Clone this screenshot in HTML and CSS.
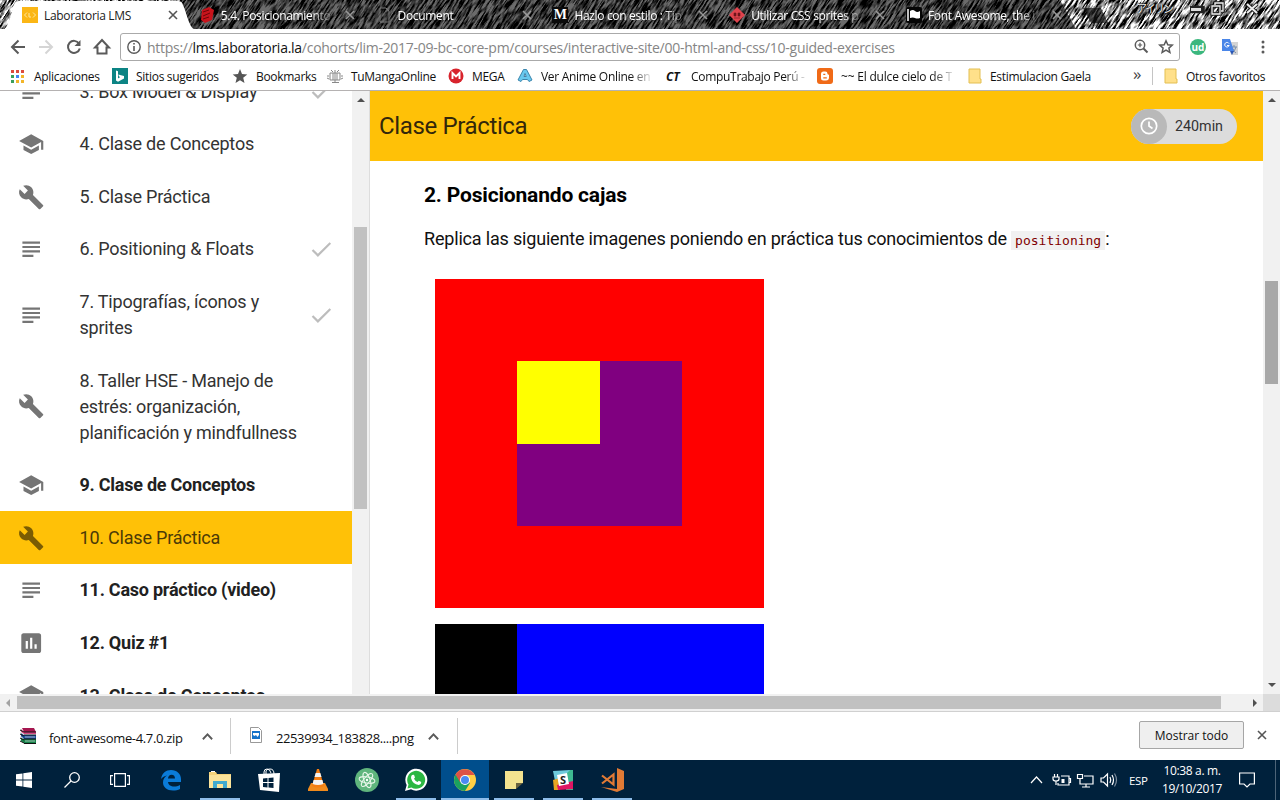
FILE: index.html
```html
<!DOCTYPE html>
<html lang="es">
<head>
<meta charset="utf-8">
<title>Laboratoria LMS</title>
<link rel="stylesheet" href="styles.css">
</head>
<body>
<svg class="defs" width="0" height="0">
  <defs>
    <symbol id="school" viewBox="0 0 24 24"><path d="M5 13.180v4L12 21l7-3.820v-4L12 17l-7-3.820zM12 3 1 9l11 6 9-4.910V17h2V9L12 3z"/></symbol>
    <symbol id="build" viewBox="0 0 24 24"><path d="M22.700 19l-9.100-9.100c.9-2.300.4-5-1.500-6.900-2-2-5-2.400-7.400-1.300L9 6 6 9 1.600 4.700C.4 7.100.9 10.100 2.900 12.100c1.900 1.900 4.600 2.400 6.900 1.500l9.100 9.100c.4.4 1 .4 1.400 0l2.300-2.300c.5-.4.5-1.100.1-1.400z"/></symbol>
    <symbol id="lines" viewBox="0 0 24 24"><path d="M4 5h16v2H4zM4 9h16v2H4zM4 13h16v2H4zM4 17h10v2H4z"/></symbol>
    <symbol id="chart" viewBox="0 0 24 24"><path fill-rule="evenodd" d="M19 3H5c-1.100 0-2 .9-2 2v14c0 1.100.9 2 2 2h14c1.100 0 2-.9 2-2V5c0-1.100-.9-2-2-2zM9 17H7v-7h2v7zm4 0h-2V7h2v10zm4 0h-2v-4h2v4z"/></symbol>
    <symbol id="check" viewBox="0 0 24 24"><path d="M9 16.200 4.800 12l-1.400 1.400L9 19 21 7l-1.400-1.400L9 16.200z"/></symbol>
    <symbol id="close" viewBox="0 0 10 10"><path d="M1 1l8 8M9 1L1 9" fill="none" stroke="currentColor" stroke-width="1.600"/></symbol>
    <symbol id="folder" viewBox="0 0 14 16"><path d="M1 1h11v10h1v4H1z" fill="#ffe08a" stroke="#e3bf52"/></symbol>
    <symbol id="up" viewBox="0 0 10 10"><path d="M.8 7.500 5 3l4.200 4.500" fill="none" stroke="#5a5a5a" stroke-width="1.700"/></symbol>
  </defs>
</svg>

<header class="tabstrip">
  <svg class="sketch" width="1280" height="29" viewBox="0 0 1280 29">
    <defs>
      <filter id="hatch" x="0" y="0" width="1" height="1" color-interpolation-filters="sRGB">
        <feTurbulence type="fractalNoise" baseFrequency="0.62 0.07" numOctaves="4" seed="7"/>
        <feColorMatrix values="3.800 0 0 0 -1.400  3.800 0 0 0 -1.400  3.800 0 0 0 -1.400  0 0 0 0 1"/>
      </filter>
    </defs>
    <g transform="rotate(34 640 14)"><rect x="-60" y="-460" width="1400" height="950" filter="url(#hatch)"/></g>
    <path class="shade" d="M180 0h880l16 29H192z"/>
    <path d="M1083 8h18l7 15h-17z" fill="#111" opacity=".7"/>
    <path d="M4 29C9 27 12 9 14 5q1-4 5-4h159q4 0 5 4c3 6 6 22 11 24z" fill="#fff"/>
  </svg>
  <div class="tabs">
    <div class="tab active">
      <svg class="fav" viewBox="0 0 16 16"><path fill="#fbb615" d="M0 0h16v16H0z"/><path d="M5 5.500 2.500 8 5 10.500M11 5.500 13.500 8 11 10.500M7 6v4h2" fill="none" stroke="#ffe7a0"/></svg>
      <span>Laboratoria LMS</span><svg class="x"><use href="#close"/></svg>
    </div>
    <div class="tab">
      <svg class="fav" viewBox="0 0 16 16"><path d="M3 3l7-3 5 3-2 10-7 3-4-3z" fill="#c8141c"/><path d="M4 5l6-2M4 9l7-3M4 12l6-2" stroke="#6f0509"/></svg>
      <span>5.4. Posicionamiento</span><svg class="x"><use href="#close"/></svg>
    </div>
    <div class="tab">
      <svg class="fav" viewBox="0 0 16 16"><path d="M4 1h6l3 3v11H4z" fill="none" stroke="#777"/></svg>
      <span>Document</span><svg class="x"><use href="#close"/></svg>
    </div>
    <div class="tab">
      <span class="fav medium">M</span>
      <span>Hazlo con estilo : Tip</span><svg class="x"><use href="#close"/></svg>
    </div>
    <div class="tab">
      <svg class="fav" viewBox="0 0 16 16"><path d="M8 0l8 8-8 8-8-8z" fill="#e0434d"/><path d="M5 6h2v3H5zM9 6h2v3H9zM5 11h6" fill="#6e151b" stroke="#6e151b" stroke-width=".6"/></svg>
      <span>Utilizar CSS sprites p</span><svg class="x"><use href="#close"/></svg>
    </div>
    <div class="tab">
      <svg class="fav" viewBox="0 0 16 16"><rect width="16" height="16" rx="2" fill="#050505"/><path d="M2 2v12" stroke="#fff" stroke-width="1.500"/><path d="M4 4q3-2 5 0t5 0v7q-3 1-5 0t-5 0z" fill="#fff"/></svg>
      <span class="loose">Font Awesome, the i</span><svg class="x"><use href="#close"/></svg>
    </div>
  </div>
  <div class="winbar">
    <span class="user">アイリン</span>
    <svg width="80" height="18" viewBox="0 0 80 18" fill="none">
      <path d="M1 7.500h12v4H1zM22 6h8v8h-8zM25 3h8v8h-3" stroke="#222" stroke-width="3.500"/>
      <path d="M1 9.500h10" stroke="#ddd" stroke-width="3"/><path d="M22 6h8v8h-8zM25 5V3h8v8h-2" stroke="#eee" stroke-width="1.300"/>
      <path d="M57 4l10 9M67 4l-10 9" stroke="#222" stroke-width="4"/><path d="M57 4l10 9M67 4l-10 9" stroke="#eee" stroke-width="2"/>
    </svg>
  </div>
</header>

<nav class="toolbar">
  <svg class="nav" width="114" height="33" viewBox="0 0 114 33" fill="none" stroke="#5a5a5a" stroke-width="2">
    <path d="M25 18H12.500M18.500 11.500 12 18l6.500 6.500"/>
    <path d="M39 18h12.500M45.500 11.500 52 18l-6.500 6.500" stroke="#d5d5d5"/>
    <path d="M79 14.500a6 6 0 1 0 .8 5"/><path d="M80.500 11v6h-6z" fill="#5a5a5a" stroke="none"/>
    <path d="M97.500 18.500v6h9v-6h2.500L102 11l-7 7.500z"/>
  </svg>
  <div class="omnibox">
    <svg width="14" height="14" viewBox="0 0 14 14"><circle cx="7" cy="7" r="6.200" fill="none" stroke="#5a5a5a" stroke-width="1.400"/><path d="M6.200 3h1.600v1.600H6.200zM6.200 6h1.600v5H6.200z" fill="#5a5a5a"/></svg>
    <span class="url">https://<b>lms.laboratoria.la</b>/cohorts/lim-2017-09-bc-core-pm/courses/interactive-site/00-html-and-css/10-guided-exercises</span>
    <svg class="omni-icons" width="42" height="16" viewBox="0 0 42 16" fill="none" stroke="#5a5a5a" stroke-width="1.500"><circle cx="6" cy="6" r="4.700"/><path d="M9.500 9.500l4 4" stroke-width="2"/><path d="M3.800 6h4.400M6 3.800v4.400" stroke-width="1.200"/><path d="M32 1.800l1.800 4 4.400.4-3.300 2.900 1 4.300L32 11.100l-3.900 2.300 1-4.300-3.300-2.900 4.400-.4z"/></svg>
  </div>
  <span class="ud">ud</span>
  <svg class="translate" width="16" height="16" viewBox="0 0 16 16"><path d="M6 3h10v13H9z" fill="#d4d4d4"/><path d="M9 8h6M12 6v2M14 8q-1 4-4 6M11 10q1 3 3 4" stroke="#7a8fa8" fill="none"/><path d="M0 0h8l4 12H0z" fill="#4a86e8"/><path d="M8 12h4l-2 4z" fill="#2b57b5"/><path d="M7 4.500a2.300 2.300 0 1 0 .2 2H5" stroke="#fff" fill="none"/></svg>
  <svg class="dots" width="4" height="16" viewBox="0 0 4 16" fill="#5a5a5a"><circle cx="2" cy="3" r="1.500"/><circle cx="2" cy="8" r="1.500"/><circle cx="2" cy="13" r="1.500"/></svg>
</nav>

<nav class="bookmarks">
  <div class="bm b1"><svg width="14" height="14" viewBox="0 0 14 14"><path fill="#dd4b3e" d="M1 1h3v3H1zM6 1h3v3H6zM11 1h3v3h-3z"/><path fill="#3a9f5c" d="M1 6h3v3H1z"/><path fill="#4285f4" d="M6 6h3v3H6z"/><path fill="#f2b529" d="M11 6h3v3h-3zM6 11h3v3H6zM11 11h3v3h-3z"/><path fill="#3a9f5c" d="M1 11h3v3H1z"/></svg><span>Aplicaciones</span></div>
  <div class="bm b2"><svg width="16" height="16" viewBox="0 0 16 16"><path fill="#0c8484" d="M0 0h16v16H0z"/><path d="M4 2.500l2 .7v7.300l2.200-1.400-1.200-.5-.8-2L12 8v2.400L6 13.700l-2-1.200z" fill="#fff"/></svg><span>Sitios sugeridos</span></div>
  <div class="bm b3"><svg width="16" height="16" viewBox="0 0 16 16"><path fill="#555" d="M8 1l2 5 5.300.4-4.100 3.400 1.300 5.200L8 12.200 3.500 15l1.300-5.200L.7 6.400 6 6z"/></svg><span>Bookmarks</span></div>
  <div class="bm b4"><svg width="16" height="16" viewBox="0 0 16 16" fill="none" stroke="#888"><path d="M3 5h10v7H3zM6 5v7M8 2v12M10 5v7M4 2l2 2M12 2l-2 2M0 10l2 1M14 11l2-1M5 14.500h7M0 8h2M14 8h2"/></svg><span>TuMangaOnline</span></div>
  <div class="bm b5"><svg width="16" height="16" viewBox="0 0 16 16"><circle cx="8" cy="8" r="7.500" fill="#d8232c"/><path d="M4.500 11V5l3.500 3.500L11.500 5v6" fill="none" stroke="#fff" stroke-width="1.900"/></svg><span>MEGA</span></div>
  <div class="bm b6"><svg width="16" height="16" viewBox="0 0 16 16"><path d="M6.500 1.500h3L15 12l-3 1.500-1.500-2h-5L4 13.500 1 12z" fill="#68c8ee" stroke="#3d86ad"/><path d="M7 8.500l1-3 1.200 3z" fill="#fff" stroke="#245c86" stroke-width=".7"/></svg><span>Ver Anime Online en</span></div>
  <div class="bm b7"><i class="ct">CT</i><span>CompuTrabajo Perú -</span></div>
  <div class="bm b8"><svg width="16" height="16" viewBox="0 0 16 16"><rect width="16" height="16" rx="3" fill="#f06a17"/><path d="M4 6q0-2.500 2.500-2.500h1.700q2.300 0 2.300 2.300 0 1 1.500 1v2.700q0 3-3 3H6.500Q4 12.500 4 10z" fill="#fff"/><path d="M6.300 6.300h2M6.300 9.800h3.500" stroke="#f06a17" stroke-width="1.200"/></svg><span>~~ El dulce cielo de T</span></div>
  <div class="bm b9"><svg width="14" height="16"><use href="#folder"/></svg><span>Estimulacion Gaela</span></div>
  <div class="more">»</div>
  <div class="bm b10"><svg width="14" height="16"><use href="#folder"/></svg><span>Otros favoritos</span></div>
</nav>

<main class="page">
  <aside class="sidebar">
    <ul class="lessons">
      <li><svg class="ico"><use href="#lines"/></svg><span>3. Box Model &amp; Display</span><svg class="ok"><use href="#check"/></svg></li>
      <li><svg class="ico"><use href="#school"/></svg><span>4. Clase de Conceptos</span></li>
      <li><svg class="ico"><use href="#build"/></svg><span>5. Clase Práctica</span></li>
      <li><svg class="ico"><use href="#lines"/></svg><span>6. Positioning &amp; Floats</span><svg class="ok"><use href="#check"/></svg></li>
      <li><svg class="ico"><use href="#lines"/></svg><span>7. Tipografías, íconos y<br>sprites</span><svg class="ok"><use href="#check"/></svg></li>
      <li><svg class="ico"><use href="#build"/></svg><span>8. Taller HSE - Manejo de<br>estrés: organización,<br>planificación y mindfullness</span></li>
      <li class="todo"><svg class="ico"><use href="#school"/></svg><span>9. Clase de Conceptos</span></li>
      <li class="current"><svg class="ico"><use href="#build"/></svg><span>10. Clase Práctica</span></li>
      <li class="todo"><svg class="ico"><use href="#lines"/></svg><span>11. Caso práctico (video)</span></li>
      <li class="todo"><svg class="ico"><use href="#chart"/></svg><span>12. Quiz #1</span></li>
      <li class="todo"><svg class="ico"><use href="#school"/></svg><span>13. Clase de Conceptos</span></li>
    </ul>
    <div class="vscroll side"><i class="arrow a-up"></i><div class="thumb"></div></div>
  </aside>
  <section class="lesson">
    <div class="head">
      <h1>Clase Práctica</h1>
      <div class="chip"><span class="clock"><svg width="24" height="24" viewBox="0 0 24 24" fill="none" stroke="#fff" stroke-width="1.700"><circle cx="12" cy="12" r="7.700"/><path d="M12 7.500V12l3.500 2.500"/></svg></span><span class="mins">240min</span></div>
    </div>
    <div class="body">
      <h2>2. Posicionando cajas</h2>
      <p>Replica las siguiente imagenes poniendo en práctica tus conocimientos de <code>positioning</code>:</p>
      <div class="red"><div class="purple"><div class="yellow"></div></div></div>
      <div class="blue"><div class="black"></div></div>
    </div>
  </section>
  <div class="vscroll outer"><i class="arrow a-up"></i><div class="thumb"></div><i class="arrow a-down"></i></div>
</main>
<div class="hscroll"><i class="arrow a-left"></i><div class="hthumb"></div><i class="arrow a-right"></i><div class="corner"></div></div>

<section class="downloads">
  <div class="dl d1">
    <svg width="18" height="18" viewBox="0 0 18 18"><path d="M3 1h12l2 4H5z" fill="#a5164f"/><path d="M2 2l3 3h12v2H5L2 5z" fill="#d94b86"/><path d="M2 6l3 2h12v4H5L2 10z" fill="#1d4f9c"/><path d="M2 11l3 1h12v4H5L2 14z" fill="#16824a"/><path d="M1 3l4 2M1 7l4 2M1 11l4 2M1 14l4 2M5 5h12M5 8h12M5 12h12M5 16.500h12" stroke="#111"/><path d="M6 10h10M6 14h10M1 5l3 2M1 9l3 2" stroke="#ddd" stroke-width=".7"/></svg>
    <span>font-awesome-4.7.0.zip</span><svg width="11" height="11"><use href="#up"/></svg>
  </div>
  <div class="dl d2">
    <svg width="14" height="18" viewBox="0 0 14 18"><path d="M1.500 1.500h8l3 3v12h-11z" fill="#fff" stroke="#999"/><path d="M3 5h8v8H3z" fill="#1673c9"/><path d="M4 7h6v2L8.500 11 7 9l-1.500 1L4 9z" fill="#fff"/></svg>
    <span>22539934_183828....png</span><svg width="11" height="11"><use href="#up"/></svg>
  </div>
  <button class="showall">Mostrar todo</button>
  <svg class="dlx"><use href="#close"/></svg>
</section>

<footer class="taskbar">
  <div class="sys"><svg width="16" height="16" viewBox="0 0 16 16" fill="#fff"><path d="M0 2.300 6.500 1.400v6.100H0zM7.300 1.300 16 0v7.500H7.300zM0 8.400h6.500v6.200L0 13.700zM7.300 8.400H16V16l-8.700-1.200z"/></svg></div>
  <div class="sys"><svg width="16" height="16" viewBox="0 0 16 16" fill="none" stroke="#fff" stroke-width="1.300"><circle cx="10.500" cy="5.500" r="4.800"/><path d="M7 9 .5 15.500"/></svg></div>
  <div class="sys"><svg width="20" height="16" viewBox="0 0 20 16" fill="none" stroke="#fff" stroke-width="1.200"><path d="M4.600 1.600h10.800v12.800H4.600zM3 3.600H.6v8.800H3M17 3.600h2.400v8.800H17"/></svg></div>
  <div class="app"><svg width="22" height="22" viewBox="0 0 22 22"><path d="M1 10C2 4 6 1 11 1c6 0 10 4 10 9v3H8c.3 3 3 4.500 6 4.500 2 0 4-.5 6-1.600v4c-2 1.100-4.500 1.600-7 1.600C7 21.500 3 18 3 13.500c0-3 1.500-5.500 4-7C4.500 7 2.500 8 1 10zm7-.5h7c0-2.300-1.200-3.800-3.400-3.800S8.300 7.200 8 9.500z" fill="#0a7bd8"/></svg></div>
  <div class="app open"><svg width="22" height="20" viewBox="0 0 22 20"><path d="M0 2h7l1 2h14v14H0z" fill="#f5d37a"/><path d="M0 5h22v13H0z" fill="#fbe39a"/><path d="M4 18v-7h14v7h-4v-4H8v4z" fill="#3fa9cf"/><path d="M2 1h4v1H2z" fill="#fff"/></svg></div>
  <div class="app"><svg width="22" height="24" viewBox="0 0 22 24"><path d="M0 6l22-1-1 19-19-2z" fill="#fff"/><path d="M6 7V4q0-3 3-3t4 4M8 6V3q0-2 4-2t4 5" fill="none" stroke="#fff"/><path d="M5 10.500l4.500-.5v4H5zM10.500 10l5-.5V14h-5zM5 15h4.500v4.500L5 19zM10.500 15h5v5l-5-.5z" fill="#00213c"/></svg></div>
  <div class="app"><svg width="22" height="24" viewBox="0 0 22 24"><path d="M4 15h14l3 6v2H1v-2z" fill="#f08a1c"/><path d="M10 1h2l5 17q-6 3-12 0z" fill="#f37e14"/><path d="M8.700 5h4.600l1.200 4h-7zM6.600 12h8.800l1 4q-5.400 2-10.800 0z" fill="#f3f3f3"/></svg></div>
  <div class="app"><svg width="24" height="24" viewBox="0 0 24 24"><circle cx="12" cy="12" r="12" fill="#5fb57d"/><g fill="none" stroke="#e6f5e8"><ellipse cx="12" cy="12" rx="3" ry="8" transform="rotate(-20 12 12)"/><ellipse cx="12" cy="12" rx="3" ry="8" transform="rotate(40 12 12)"/><ellipse cx="12" cy="12" rx="3" ry="8" transform="rotate(100 12 12)"/></g><circle cx="12" cy="12" r="1.200" fill="#fff"/></svg></div>
  <div class="app open"><svg width="24" height="24" viewBox="0 0 24 24"><path d="M1 23l1.700-6A11 11 0 1 1 7 21.300z" fill="#fff"/><path d="M3.500 20.500l1-4A9 9 0 1 1 7.500 19.500z" fill="#2cb742"/><path d="M8 7l2-.2 1 2.700-1 1.300q1.200 2.400 3.600 3.300l1.200-1.300 2.500 1.200q0 2.500-2.500 3Q8.500 16.200 7 10q0-2 1-3z" fill="#fff"/></svg></div>
  <div class="app open focus"><svg width="22" height="22" viewBox="0 0 22 22"><circle cx="11" cy="11" r="11" fill="#ffce44"/><path d="M11 11 1.500 5.500A11 11 0 0 0 11 22l5-8z" fill="#1aa15f"/><path d="M1.500 5.500A11 11 0 0 1 20.600 6H11l-5 7z" fill="#de5246"/><circle cx="11" cy="11" r="5" fill="#fff"/><circle cx="11" cy="11" r="4" fill="#4a89f3"/></svg></div>
  <div class="app open"><svg width="18" height="18" viewBox="0 0 18 18"><path d="M0 0h18v12h-7v6H0z" fill="#f3e38f"/><path d="M11 18v-6h7z" fill="#68623f"/></svg></div>
  <div class="app open"><svg width="20" height="20" viewBox="0 0 20 20"><path d="M0 1l17-1v8L2 11z" fill="#6ecadc"/><path d="M17 0l3 0v20h-7V4z" fill="#3eb991"/><path d="M0 10l7-2v12H1z" fill="#e8a723"/><path d="M4 15l16-4v8L5 20z" fill="#e01563"/><path d="M4 5l10-2 2 11-10 2z" fill="#fff"/></svg><b class="slack">S</b></div>
  <div class="app open"><svg width="24" height="24" viewBox="0 0 24 24"><path d="M17 0l7 3v18l-7 3-16-5 16 2V2z" fill="#e07a35"/><path d="M2 7.500l11.500 9V6.500L2 15.500" fill="none" stroke="#e07a35" stroke-width="2.200"/></svg></div>
  <div class="tray">
    <svg width="90" height="18" viewBox="0 0 90 18" fill="none" stroke="#fff" stroke-width="1.200">
      <path d="M1 12l5.500-6 5.500 6"/>
      <path d="M31 5h8v9H28v-2M39 7.500h1.500v4H39M24.500 3v3M27.500 3v3M23 6h6v2q0 2-3 2t-3-2zM26 10v4"/><path d="M31.500 8h3v4h-3z" fill="#fff" stroke="none"/>
      <path d="M54 5h9v8H50V9M56 13v3M52 16h8M47.500 3.500h5v4h-5zM50 7.500V9"/>
      <path d="M71 7h2.500l4-4v12l-4-4H71zM80 6q1.500 3 0 6M82 4q3 5 0 10"/><path d="M84.500 2.500q4 6.500 0 13" stroke="#7d8c9c"/>
    </svg>
    <span class="lang">ESP</span>
    <div class="time"><span>10:38 a. m.</span><span>19/10/2017</span></div>
    <svg class="note" width="16" height="16" viewBox="0 0 16 16" fill="none" stroke="#fff" stroke-width="1.200"><path d="M.6 1h14.800v11H11l-3 3-3-3H.6z"/></svg>
  </div>
</footer>
</body>
</html>
```

FILE: styles.css
```css
* { box-sizing: border-box; }
body {
  margin: 0;
  width: 1280px;
  height: 800px;
  overflow: hidden;
  display: flex;
  flex-direction: column;
  background: #fff;
  font: 12px "Open Sans", "Noto Sans CJK JP", sans-serif;
  color: #111;
}
.defs { position: absolute; }
svg { flex: none; display: block; }

/* tab strip */
.tabstrip { position: relative; height: 29px; flex: none; display: flex; background: #333; overflow: hidden; }
.sketch { position: absolute; left: 0; top: 0; }
.shade { fill: #000; opacity: .58; }
.tabs { position: relative; display: flex; width: 1132px; }
.tab { width: 176.800px; height: 29px; padding: 1px 0 0 22px; display: flex; align-items: center; color: #fff; }
.tab.active { color: #222; }
.fav { width: 16px; height: 16px; margin-right: 6px; flex: none; }
.medium { background: #0b0b0b; color: #fff; font: bold 14px/16px "Liberation Serif", serif; text-align: center; }
.tab span:not(.fav) { width: 114px; white-space: nowrap; letter-spacing: -.33px; margin-right: 10px; flex: none; }
.tab:not(.active) span:not(.fav) { -webkit-mask-image: linear-gradient(90deg, #000 80%, transparent); }
.tab .loose { letter-spacing: -.1px; }
.x { width: 10px; height: 10px; color: #555; }
.tab:not(.active) .x { color: #999; }
.winbar { position: relative; display: flex; align-items: flex-start; gap: 16px; padding-left: 4px; }
.user { width: 38px; color: #eee; font-size: 11px; line-height: 17px; letter-spacing: -1.800px; white-space: nowrap; text-shadow: 0 0 2px #000, 0 0 2px #000, 0 0 3px #000; }

/* toolbar */
.toolbar { height: 34px; flex: none; display: flex; padding-right: 15px; }
.nav { margin-right: 6px; }
.omnibox { width: 1060px; height: 28px; margin-top: 4px; border: 1px solid #aaa; border-radius: 3px; display: flex; align-items: center; padding-left: 6px; }
.url { font-size: 14px; color: #858585; margin-left: 6px; width: 760px; white-space: nowrap; letter-spacing: -.27px; }
.url b { font-weight: 400; color: #111; }
.omni-icons { margin-left: auto; margin-right: 3px; }
.ud { width: 16px; height: 16px; margin: 10px 16px 0 10px; border-radius: 8px; background: #3bb77e; color: #fff; font: bold 10px/17px "Open Sans", sans-serif; text-align: center; }
.translate { margin-top: 10px; }
.dots { margin: 10px 0 0 auto; }

/* bookmarks bar */
.bookmarks { height: 28px; flex: none; display: flex; align-items: center; padding: 0 0 1px 10px; border-bottom: 1px solid #b5b2b2; }
.bm { display: flex; align-items: center; gap: 8px; height: 26px; flex: none; }
.bm span { white-space: nowrap; letter-spacing: -.3px; }
.b1 { width: 102px; gap: 10px; }
.b2 { width: 120px; }
.b3 { width: 95px; }
.b4 { width: 121px; }
.b5 { width: 69px; }
.b6 { width: 149px; }
.b7 { width: 151px; }
.b8 { width: 151px; }
.b9 { width: 165px; }
.b6 span, .b7 span, .b8 span { -webkit-mask-image: linear-gradient(90deg, #000 82%, rgba(0,0,0,.15)); }
.b8 span { letter-spacing: -.2px; }
.ct { width: 17px; font: italic bold 12px "Open Sans", sans-serif; }
.more { width: 20px; height: 18px; border-right: 1px solid #c4c4c4; font-size: 17px; line-height: 14px; color: #444; margin-right: 11px; }

/* page */
.page { height: 603px; flex: none; display: flex; overflow: hidden; font-family: Roboto, sans-serif; }
.sidebar { width: 370px; display: flex; border-right: 1px solid #ddd; overflow: hidden; }
.lessons { width: 352px; margin: -25.700px 0 0; padding: 0; list-style: none; flex: none; }
.lessons li { display: flex; align-items: center; padding: 13.300px 18px; font-size: 18px; line-height: 26px; color: #333; }
.lessons span { width: 231px; white-space: nowrap; flex: none; letter-spacing: -.21px; }
.ico { width: 26.400px; height: 26.400px; margin: -2px 35.100px -2px 0; fill: #757575; }
.ok { width: 26.400px; height: 26.400px; margin: -2px 0 -2px -2.500px; fill: #bdbdbd; }
.lessons .todo { font-weight: 700; color: #212121; }
.lessons .todo span { letter-spacing: -.24px; }
.lessons .current { background: #ffc107; color: #4b3a08; }
.lessons .current .ico { fill: #7a5c03; }

.vscroll { width: 17px; height: 603px; background: #f1f1f1; display: flex; flex-direction: column; align-items: center; flex: none; }
.arrow { width: 0; height: 0; border: 4px solid transparent; flex: none; }
.a-up { border-top: 0; border-bottom-color: #505050; margin-top: 7px; }
.a-down { border-bottom: 0; border-top-color: #505050; margin: auto 0 7px; }
.thumb { width: 13px; }
.side .thumb { height: 282px; margin-top: 125px; background: #c1c1c1; }
.outer .thumb { height: 103px; margin-top: 179px; background: #a8a8a8; }

.lesson { width: 893px; flex: none; overflow: hidden; }
.head { height: 70px; background: #ffc107; display: flex; align-items: center; justify-content: space-between; padding: 0 26px 0 9px; }
.head h1 { margin: 0; font-size: 24px; font-weight: 400; letter-spacing: -.36px; color: #33270a; }
.chip { width: 106px; height: 35px; border-radius: 18px; background: #dcdcdc; display: flex; align-items: center; gap: 8px; }
.clock { width: 36px; height: 35px; border-radius: 18px; background: #b9b9b9; display: flex; align-items: center; justify-content: center; }
.mins { font-size: 14.300px; color: #333; }
.body { padding: 20px 0 0 54px; color: #111; }
.body h2 { margin: 0; font-size: 21px; line-height: 28px; font-weight: 700; letter-spacing: -.18px; color: #000; }
.body p { margin: 16px 0 0; font-size: 18px; line-height: 27px; letter-spacing: -.18px; white-space: nowrap; }
code { font: 13px "DejaVu Sans Mono", monospace; letter-spacing: 0; color: #800000; background: #f1f1f1; padding: 2px 4px; }
.red { width: 329.500px; height: 329.500px; margin: 26.500px 0 0 10.500px; padding: 82.500px; background: red; }
.purple { width: 164.500px; height: 165px; background: purple; }
.yellow { width: 82.500px; height: 82.500px; background: yellow; }
.blue { width: 329.500px; height: 80px; margin: 15.500px 0 0 10.500px; background: blue; }
.black { width: 82px; height: 80px; background: #000; }

.hscroll { height: 18px; flex: none; display: flex; align-items: center; background: #f1f1f1; border-bottom: 1px solid #d0d0d0; }
.a-left { border-left: 0; border-right-color: #a3a3a3; margin: 0 7px 0 6px; }
.hthumb { width: 1204px; height: 13px; background: #c1c1c1; }
.a-right { border-right: 0; border-left-color: #505050; margin-left: 32px; }
.corner { width: 17px; height: 17px; margin-left: auto; background: #dcdcdc; }

/* downloads shelf */
.downloads { height: 48px; flex: none; display: flex; align-items: center; }
.dl { height: 36px; display: flex; align-items: center; border-right: 1px solid #ccc; font-size: 13px; }
.dl span { white-space: nowrap; padding-top: 4px; letter-spacing: -.34px; }
.d1 { width: 231px; padding-left: 19px; }
.d2 { width: 227px; padding-left: 18px; }
.d2 svg:first-child { margin-top: -3px; }
.d1 span { width: 153px; margin-left: 12px; }
.d2 span { width: 152px; margin-left: 13px; letter-spacing: -.4px; }
.showall { width: 105px; height: 28px; margin: -2px 13px 0 auto; padding: 0; border: 1px solid #a6a6a6; border-radius: 2px; background: #efefef; color: #111; font: 12px "Open Sans", sans-serif; }
.dlx { width: 10px; height: 10px; margin: -2px 13px 0 0; color: #555; }

/* taskbar */
.taskbar { height: 40px; flex: none; display: flex; background: #00213c; color: #fff; }
.sys { width: 48px; display: flex; align-items: center; justify-content: center; }
.app { position: relative; width: 40px; margin-left: 9px; display: flex; align-items: center; justify-content: center; }
.sys + .app { margin-left: 7px; }
.app.open { border-bottom: 2px solid #8ebdea; padding-top: 2px; }
.app.focus { width: 48px; margin: 0 -4px 0 5px; background: #004e8c; }
.slack { position: absolute; left: 17px; top: 12px; font-size: 11px; line-height: 15px; color: #222; }
.tray { margin-left: auto; display: flex; align-items: center; margin-right: 4px; padding-right: 20px; border-right: 1px solid #4d6478; }
.lang { width: 20px; margin-left: 9px; font-size: 11.500px; letter-spacing: -.4px; }
.time { width: 72px; margin: 0 11px 0 7px; display: flex; flex-direction: column; align-items: center; line-height: 18px; letter-spacing: -.35px; white-space: nowrap; }
```
